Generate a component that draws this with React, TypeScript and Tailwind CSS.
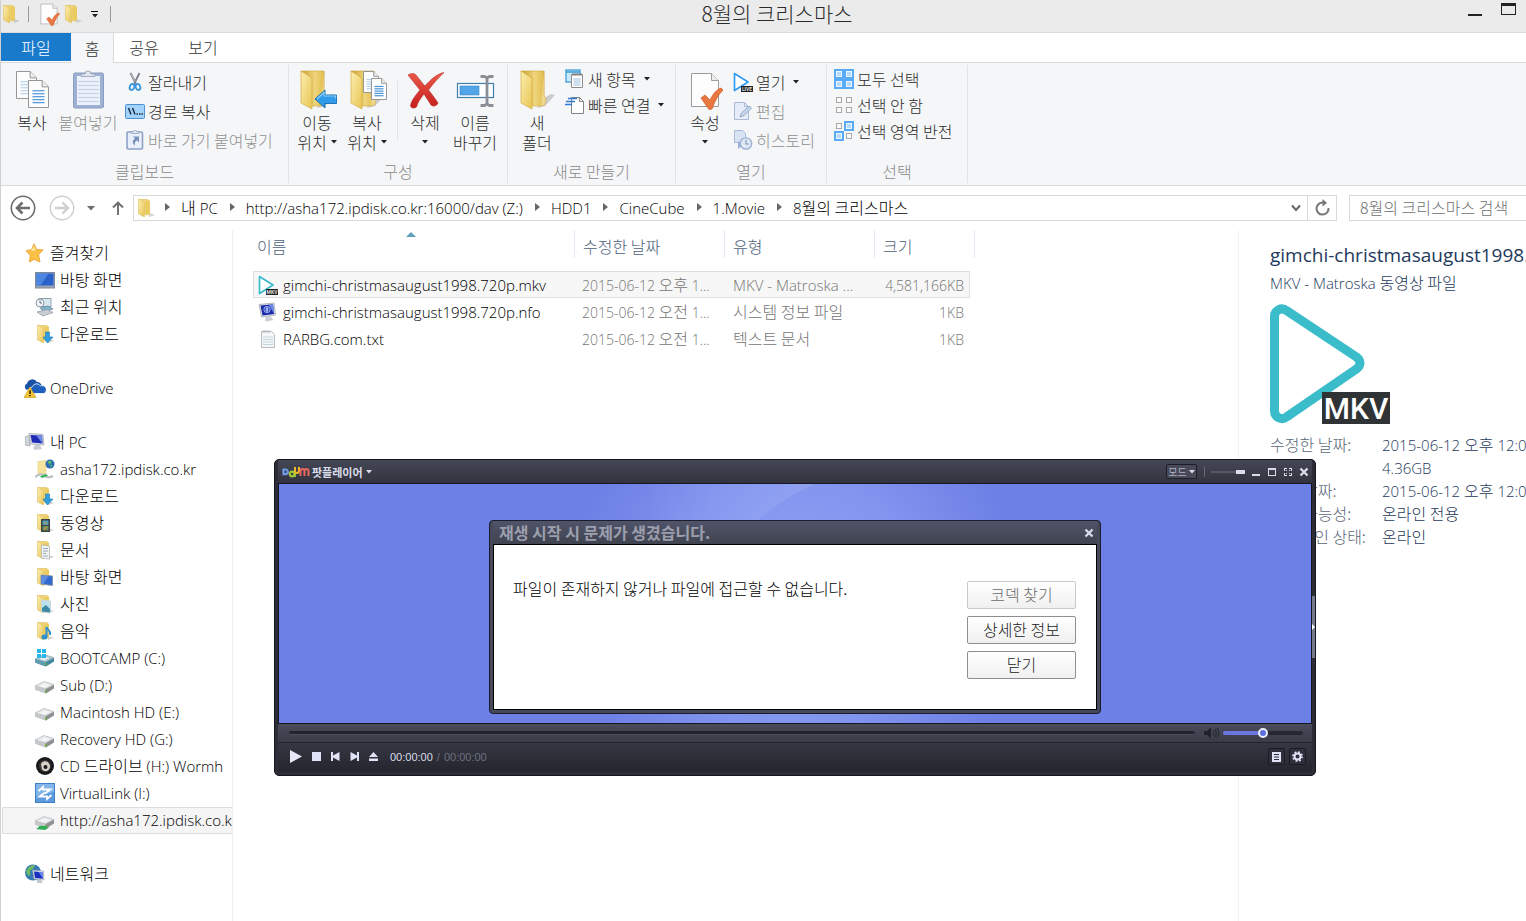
import type { ReactNode } from "react";

/* ---------- text ---------- */

const LATIN = "font-['Open_Sans','Noto_Sans_CJK_KR',sans-serif]";

/** Sets Latin runs in a slightly smaller humanist face beside Hangul. */
function Mix({ text, small = false }: { text: string; small?: boolean }) {
  const parts = text.split(/([\uAC00-\uD7A3]+(?: [\uAC00-\uD7A3]+)*)/);
  return (
    <span className="whitespace-pre">
      {parts.map((p, i) =>
        i % 2 === 1 ? (
          <span key={i}>{p}</span>
        ) : p ? (
          <span key={i} className={`${LATIN} leading-none ${small ? "text-[14px]" : "text-[15px]"}`}>
            {p}
          </span>
        ) : null,
      )}
    </span>
  );
}

/* ---------- icons ---------- */

type Size = { size?: number };

function Folder({ size = 20, children }: Size & { children?: ReactNode }) {
  return (
    <svg width={size} height={size} viewBox="0 0 20 20" className="shrink-0" aria-hidden="true">
      <defs>
        <linearGradient id="fold" x1="0" y1="0" x2="1" y2="1">
          <stop offset="0" stopColor="#fdf0b4" />
          <stop offset="1" stopColor="#e6c353" />
        </linearGradient>
      </defs>
      <path d="M12 15l5 1 2 1-6 2z" fill="#b9b9b9" opacity=".6" />
      <path d="M3 1.500h8.500l1.500 1V15.500H3z" fill="#f0d477" stroke="#d9b74d" strokeWidth=".5" />
      <path d="M9.500 3.500l4.500-1v14l-4.500 1z" fill="#e9cb62" />
      <path d="M2.500 1l6 3.500v14.500l-6-3z" fill="url(#fold)" stroke="#dcbd5c" strokeWidth=".5" />
      {children}
    </svg>
  );
}

function BigFolder({ children }: { children?: ReactNode }) {
  return (
    <svg width="40" height="40" viewBox="0 0 40 40" aria-hidden="true">
      <defs>
        <linearGradient id="bf1" x1="0" y1="0" x2="1" y2="1">
          <stop offset="0" stopColor="#fbeeb0" />
          <stop offset="1" stopColor="#e9c552" />
        </linearGradient>
        <linearGradient id="bf2" x1="0" y1="0" x2="1" y2="0">
          <stop offset="0" stopColor="#c99e2d" />
          <stop offset=".6" stopColor="#efd57c" />
          <stop offset="1" stopColor="#e2bd50" />
        </linearGradient>
      </defs>
      <path d="M24 30l10-6 4 1-10 11-8 2z" fill="#9a9a9a" opacity=".45" />
      <path d="M4 1h23v33l-3 2H12z" fill="url(#bf2)" stroke="#cda43a" strokeWidth=".6" />
      <path d="M27 1v25l2 2-1 7-4 1" fill="#efd88c" stroke="#cda43a" strokeWidth=".5" />
      <path d="M4 1l11 7v31L4 33z" fill="url(#bf1)" stroke="#d4ac44" strokeWidth=".7" />
      {children}
    </svg>
  );
}

function Page({ x, y, w, h, lines = "#4a95d8" }: { x: number; y: number; w: number; h: number; lines?: string }) {
  const rows = [0.38, 0.49, 0.6, 0.71, 0.82];
  return (
    <g>
      <path
        d={`M${x} ${y}h${w * 0.68}l${w * 0.32} ${w * 0.32}v${h - w * 0.32}h${-w}z`}
        fill="#fdfdfd"
        stroke="#969696"
        strokeWidth="1"
      />
      <path d={`M${x + w * 0.68} ${y}v${w * 0.32}h${w * 0.32}`} fill="#eee" stroke="#969696" strokeWidth="1" />
      {rows.map((r) => (
        <path key={r} d={`M${x + w * 0.2} ${y + h * r}h${w * 0.6}`} stroke={lines} strokeWidth="1.200" />
      ))}
    </g>
  );
}

const CopyIcon = () => (
  <svg width="36" height="40" viewBox="0 0 36 40" aria-hidden="true">
    <Page x={2.5} y={1.5} w={20} h={27} lines="#b9d3ea" />
    <Page x={14.5} y={10.5} w={20} h={27} />
  </svg>
);

const PasteIcon = () => (
  <svg width="34" height="40" viewBox="0 0 34 40" aria-hidden="true">
    <path d="M4 3h27a1.500 1.500 0 011.500 1.500V37l-2 1H4a1.500 1.500 0 01-1.500-1.500v-32A1.500 1.500 0 014 3z" fill="#9fb1d3" stroke="#8b9dc0" />
    <path d="M6 6h23v29H6z" fill="#eaf1fb" />
    <path d="M7 11.500h21M7 15.500h21M7 19.500h21M7 23.500h21M7 27.500h21M7 31.500h21" stroke="#c3d0e8" />
    <path d="M10 6.500V4h4a3 3 0 016 0h4v2.500z" fill="#dfe4ee" stroke="#96a3bb" strokeWidth=".9" />
  </svg>
);

const CutIcon = () => (
  <svg width="20" height="20" viewBox="0 0 20 20" aria-hidden="true">
    <path d="M5.500 1l5.500 11M14.500 1L9 12" stroke="#7c858f" strokeWidth="1.900" />
    <path d="M6 1.500l4 8" stroke="#c9ced4" strokeWidth=".7" />
    <ellipse cx="7" cy="15" rx="2.300" ry="3" fill="none" stroke="#3b97dd" strokeWidth="1.900" transform="rotate(20 7 15)" />
    <ellipse cx="13" cy="15" rx="2.300" ry="3" fill="none" stroke="#3b97dd" strokeWidth="1.900" transform="rotate(-20 13 15)" />
  </svg>
);

const PathIcon = () => (
  <svg width="20" height="20" viewBox="0 0 20 20" aria-hidden="true">
    <rect x=".5" y="3.500" width="19" height="14" rx="1" fill="#a3d2fb" stroke="#4d90cf" />
    <path d="M3.500 7l2.500 6.500M7.500 7l2.500 6.500" stroke="#16293c" strokeWidth="1.400" />
    <path d="M11.500 13h1.400M14 13h1.400M16.500 13h1.400" stroke="#16293c" strokeWidth="1.500" />
  </svg>
);

const ShortcutIcon = () => (
  <svg width="20" height="20" viewBox="0 0 20 20" aria-hidden="true">
    <rect x="2" y="2" width="15.500" height="17" rx="1" fill="#e8eefa" stroke="#8da1c9" strokeWidth="1.600" />
    <path d="M6.500 3.500V1.500h2a1.500 1.500 0 013 0h2v2z" fill="#dfe4ee" stroke="#97a5bf" strokeWidth=".8" />
    <path d="M8 6.500h6v6l-2-2c-2 1-2.500 2.500-2 5-3-2-3-5 0-7z" fill="#7a90bd" />
  </svg>
);

const MoveIcon = () => (
  <BigFolder>
    <path d="M18 29l10-9v5h11.500v8.500H28V38z" fill="#2f9bea" stroke="#1769ad" strokeWidth=".9" />
    <path d="M20 29l7-6.500v3.500h11.500v2.500" fill="none" stroke="#8ccdfa" strokeWidth="1.200" />
  </BigFolder>
);

const CopyToIcon = () => (
  <BigFolder>
    <Page x={16.5} y={1.5} w={15} h={21} lines="#b9d3ea" />
    <Page x={24.5} y={8.5} w={15} h={21} />
  </BigFolder>
);

const DeleteIcon = () => (
  <svg width="40" height="40" viewBox="0 0 40 40" aria-hidden="true">
    <defs>
      <linearGradient id="del" x1="0" y1="0" x2="0" y2="1">
        <stop offset="0" stopColor="#ec5a4a" />
        <stop offset="1" stopColor="#c61f1c" />
      </linearGradient>
    </defs>
    <path
      d="M3 5c3-2 6-2 8 0 4 5 6 8 9 11C26 9 32 4 39 2.500 33 8 28 14 23.500 20c4 5 7 9 9.500 13-1 3-5 4-7 2-2-4-5-7-7-11-4 5-6 8-7.500 13-2 1.500-5 1.500-6-1C6 31 10 26 15 20 11 15 7 10 3 5z"
      fill="url(#del)"
      stroke="#b32a22"
      strokeWidth=".6"
    />
  </svg>
);

const RenameIcon = () => (
  <svg width="40" height="40" viewBox="0 0 40 40" aria-hidden="true">
    <rect x="2.500" y="13.500" width="36" height="14" fill="#fff" stroke="#3f7fae" strokeWidth="1.200" />
    <rect x="5" y="16" width="19" height="9" fill="#51a5e8" stroke="#3a83c2" strokeWidth=".6" />
    <path d="M25.500 6.500h4l2.500 1.500 2.500-1.500h4M32 8v27M25.500 35.500h4l2.500-1.500 2.500 1.500h4" fill="none" stroke="#8a8f95" strokeWidth="2.800" />
  </svg>
);

const NewItemIcon = () => (
  <svg width="20" height="20" viewBox="0 0 20 20" aria-hidden="true">
    <rect x="1" y="1" width="14" height="12" fill="#cbe9fb" stroke="#3d9fd6" strokeWidth="1.300" />
    <path d="M1 3h14" stroke="#3d9fd6" strokeWidth="1.600" />
    <path d="M6.500 5.500h11v13h-11z" fill="#fff" stroke="#8c8c8c" />
    <path d="M8 4v3M10 4v3M12 4v3M14 4v3M16 4v3" stroke="#777" strokeWidth=".9" />
    <path d="M8.500 10h7M8.500 12h7M8.500 14h7M8.500 16h7" stroke="#9fbfe0" />
  </svg>
);

const EasyIcon = () => (
  <svg width="20" height="20" viewBox="0 0 20 20" aria-hidden="true">
    <path d="M6.500 2.500h8l4 4v12h-12z" fill="#fff" stroke="#858585" />
    <path d="M14.500 2.500v4h4" fill="none" stroke="#858585" />
    <path d="M3 3.500h9M1 6.500h9M0 9.500h7" stroke="#2f7cd0" strokeWidth="1.500" />
  </svg>
);

const PropsIcon = ({ size = 40 }: Size) => (
  <svg width={size} height={size} viewBox="0 0 40 40" aria-hidden="true">
    <path d="M6.500 3.500h20l7 7v26h-27z" fill="#fdfdfd" stroke="#9b9b9b" />
    <path d="M26.500 3.500v7h7" fill="#eee" stroke="#9b9b9b" />
    <path d="M16 28l4-3 5 5c3-6 6-10 11-12l2 2c-5 5-8 11-11 19l-3 .5z" fill="#e97742" stroke="#cf5a26" strokeWidth=".7" />
  </svg>
);

const PlayFileIcon = ({ color, tag }: { color: string; tag: string }) => (
  <svg width="20" height="20" viewBox="0 0 20 20" aria-hidden="true">
    <path d="M1.500 1.500L15 10 1.500 18.500z" fill="#fff" stroke={color} strokeWidth="1.700" strokeLinejoin="round" />
    <rect x="8" y="14" width="12" height="6" fill="#222" />
    <text x="14" y="19" textAnchor="middle" fontFamily="Roboto" fontSize="5" fontWeight="700" fill="#ddd">
      {tag}
    </text>
  </svg>
);

const EditIcon = () => (
  <svg width="20" height="20" viewBox="0 0 20 20" aria-hidden="true">
    <path d="M1.500 1.500h10l4 4v13h-14z" fill="#e6edf8" stroke="#a9b9d6" />
    <path d="M11.500 1.500v4h4" fill="none" stroke="#a9b9d6" />
    <path d="M7 16l1.500-4L16 5l2.500 2-7.500 7.500z" fill="#c4d3ea" stroke="#8ea3c8" strokeWidth=".9" />
  </svg>
);

const HistoryIcon = () => (
  <svg width="20" height="20" viewBox="0 0 20 20" aria-hidden="true">
    <path d="M1.500.5h8l3 3v9h-11z" fill="#d8e3f3" stroke="#a9bbd9" />
    <path d="M5 11l5 4-5 4z" fill="#9bb2d8" />
    <circle cx="13" cy="13.500" r="5.700" fill="#dfe8f5" stroke="#9db0d2" strokeWidth="1.300" />
    <path d="M13 10v4h3" fill="none" stroke="#8398c0" strokeWidth="1.200" />
  </svg>
);

function SelectIcon({ on }: { on: boolean[] }) {
  const cells = [
    [0, 0],
    [10, 0],
    [0, 10],
    [10, 10],
  ];
  return (
    <svg width="20" height="20" viewBox="0 0 20 20" aria-hidden="true">
      {cells.map(([x, y], i) => (
        <g key={i}>
          {on[i] && <rect x={x} y={y} width="10" height="10" fill="#5aabf5" />}
          <rect
            x={x + 2.5}
            y={y + 2.5}
            width="5"
            height="5"
            fill={on[i] ? "#b5dafb" : "#fafafa"}
            stroke={on[i] ? "#eaf5ff" : "#a8a8a8"}
          />
        </g>
      ))}
    </svg>
  );
}

const Star = () => (
  <svg width="20" height="20" viewBox="0 0 20 20" aria-hidden="true">
    <path d="M9 .8l2.600 5.700 6.600.3-4.600 5 1.400 7.200-5.800-2.600L4.500 19l.7-6.500L1 7.500l5.500-.7z" fill="#fbc147" stroke="#e89d2e" strokeWidth=".8" />
    <path d="M9 3l1.800 4.500L6 8z" fill="#ffe59a" />
  </svg>
);

const Desktop = () => (
  <svg width="20" height="20" viewBox="0 0 20 20" aria-hidden="true">
    <rect x=".5" y="2.500" width="19" height="15.500" fill="#9aa6b5" stroke="#7e8a99" />
    <rect x="1.500" y="3.500" width="17" height="12" fill="#2a62c9" />
    <path d="M1.500 3.500h12l-8 12h-4z" fill="#4d86e2" />
  </svg>
);

const Recent = () => (
  <svg width="20" height="20" viewBox="0 0 20 20" aria-hidden="true">
    <rect x="4" y="1.500" width="12" height="8" fill="#d7e6ef" stroke="#95a5b0" />
    <circle cx="5" cy="6" r="4" fill="#eef4f8" stroke="#8d9ba6" />
    <path d="M5 3.500V6h2" fill="none" stroke="#5d6a75" strokeWidth=".9" />
    <path d="M5 11l8-2 5 3-9 3z" fill="#7eb6cf" stroke="#6a8391" strokeWidth=".7" />
    <path d="M2 15l10-2.500 6 3-10 3.500z" fill="#c7ced4" stroke="#8b959d" strokeWidth=".7" />
  </svg>
);

const Cloud = () => (
  <svg width="22" height="20" viewBox="0 0 22 20" className="shrink-0" aria-hidden="true">
    <path d="M3 12a3.500 3.500 0 010-6.500A5.500 5.500 0 0113 4a5 5 0 015 5H7z" fill="#1a52a8" />
    <path d="M8 15.500a4 4 0 01.5-7 4.500 4.500 0 018-.5 3.800 3.800 0 013.500 7.500z" fill="#1f5fbd" stroke="#fff" strokeWidth=".8" />
    <path d="M6 9l6 10.500H0z" fill="#f5c433" stroke="#c9971b" strokeWidth=".6" />
    <path d="M6 12.500v3.500M6 17v1.300" stroke="#2b2108" strokeWidth="1.500" />
  </svg>
);

const Pc = () => (
  <svg width="20" height="20" viewBox="0 0 20 20" aria-hidden="true">
    <path d="M0 5l5-2v11l-5-1z" fill="#cfd4da" stroke="#8f979f" strokeWidth=".6" />
    <path d="M4 1.500l14 .8.800 10.700L5.500 12z" fill="#dfe3e8" stroke="#98a1ab" strokeWidth=".7" />
    <path d="M5.500 3l11.500.5.500 8L7 10.500z" fill="#1f2bb5" />
    <path d="M11 3.300l6 .2.500 8z" fill="#6f8bea" />
    <path d="M10 13h5l2 4-7 1-2-2z" fill="#c9ced4" />
  </svg>
);

const Nfo = () => (
  <svg width="20" height="20" viewBox="0 0 20 20" aria-hidden="true">
    <path d="M1 2.500L16 1l1.500 12L3.500 15z" fill="#dfe3e8" stroke="#98a1ab" strokeWidth=".7" />
    <path d="M2.500 3.500L15 2.300l1.200 9.700L4.500 13.500z" fill="#1c2aa8" />
    <path d="M11 3l4-.7 1.200 9.700z" fill="#6f8bea" />
    <circle cx="9" cy="7.500" r="3.200" fill="#3f59d0" stroke="#a9bcf5" strokeWidth=".8" />
    <path d="M9 5.500v4" stroke="#e4ebff" strokeWidth="1.300" />
    <path d="M8 15l5-.7 1 2.500 2 1.200-8 1.500-1-1.500z" fill="#c9ced4" />
  </svg>
);

const Globe = ({ x, y, r }: { x: number; y: number; r: number }) => (
  <g>
    <circle cx={x} cy={y} r={r} fill="#2d6db5" />
    <path d={`M${x - r * 0.6} ${y - r * 0.5}q${r * 0.6} ${-r * 0.5} ${r} 0l${-r * 0.5} ${r * 0.7}z`} fill="#62b964" />
    <path d={`M${x} ${y + r * 0.2}h${r * 0.6}l${-r * 0.4} ${r * 0.6}z`} fill="#62b964" />
  </g>
);

const NetFolder = () => (
  <svg width="20" height="20" viewBox="0 0 20 20" aria-hidden="true">
    <path d="M3 2.500l8-1v13H3z" fill="#f6e49e" stroke="#dcc468" strokeWidth=".5" />
    <Globe x={15} y={5} r={4.5} />
    <path d="M0 18c4-3 7-3 9-1.500S15 19 18 17" fill="none" stroke="#b9c0c5" strokeWidth="2.200" />
    <path d="M5 17.500l6-2.500 2 1.500-6 2.500z" fill="#2fb256" />
  </svg>
);

const Drive = ({ windows = false, green = false }: { windows?: boolean; green?: boolean }) => (
  <svg width="20" height="20" viewBox="0 0 20 20" aria-hidden="true">
    <path d="M0 11l9-4.500 10 3v4L11 18.500 0 14.500z" fill={windows ? "#3f86a0" : "#8d9193"} />
    <path d="M0 11l9-4.500 10 3L10.500 14z" fill={windows ? "#a9c7d2" : "#e6e8e9"} stroke="#b2b6b8" strokeWidth=".5" />
    <path d="M4 11l5.500-2.500 5 1.500-5 2.500z" fill="#f8f8f8" opacity=".8" />
    <path d="M0 11l10.500 3v4.500L0 14.500z" fill={windows ? "#5f9db3" : "#c5c9cb"} />
    <path d="M11 15v2.500" stroke="#6ea82e" strokeWidth="1.400" />
    {windows && <path d="M2 1h4v4H2zM7 1h4v4H7zM2 6h4v4H2zM7 6h4v4H7z" fill="#28b5e9" />}
    {green && <path d="M1 19l5-3.500 8 2-4 2.500zM4 16h7v3H4z" fill="#2fae5a" />}
  </svg>
);

const Disc = () => (
  <svg width="20" height="20" viewBox="0 0 20 20" aria-hidden="true">
    <circle cx="10" cy="10" r="9" fill="#17191b" />
    <circle cx="10" cy="10" r="6" fill="#3d3a38" />
    <path d="M6 8a4.500 4.500 0 018-.5 5 5 0 01-1 7 5 5 0 01-6-1z" fill="#d8d2c8" />
    <circle cx="10.500" cy="11" r="2" fill="#1c1c1c" />
  </svg>
);

const VLink = () => (
  <svg width="20" height="20" viewBox="0 0 20 20" aria-hidden="true">
    <rect x=".5" y=".5" width="19" height="19" fill="#5b9ade" stroke="#3f7fc6" />
    <path d="M1 1h18v8L1 13z" fill="#82b6ea" />
    <path d="M3.500 8L8 4v2.500h7.500L10 10.500M16.500 12L12 16v-2.500H4.500L10 9.500" fill="none" stroke="#fff" strokeWidth="1.800" />
  </svg>
);

const NetworkIcon = () => (
  <svg width="20" height="20" viewBox="0 0 20 20" aria-hidden="true">
    <circle cx="8" cy="8.500" r="8" fill="#3579b5" />
    <path d="M1 7c2-4 5-6 9-6-1 3-2 4-4 5s0 3-1 5-3 0-4-4z" fill="#6cbd5d" />
    <path d="M7.500 6l11 1 .5 9L9 15z" fill="#dde2e8" stroke="#8e98a3" strokeWidth=".6" />
    <path d="M9 7.500l8.500.7.500 6.500-8-.8z" fill="#1b2fc0" />
    <path d="M13.500 8l4 .3.500 6.200z" fill="#6c8df0" />
    <path d="M12 16h4l2 3h-6z" fill="#c3c8ce" />
  </svg>
);

const Txt = () => (
  <svg width="20" height="20" viewBox="0 0 20 20" aria-hidden="true">
    <path d="M3.500 2.500h10l3 3v13h-13z" fill="#f4f6f7" stroke="#b6bcc0" />
    <path d="M5 1v3M7 1v3M9 1v3M11 1v3" stroke="#b6bcc0" strokeWidth=".9" />
    <path d="M5 8h10M5 10.500h10M5 13h10M5 15.500h10" stroke="#c3d5e0" strokeWidth="1.200" />
  </svg>
);

const DownFolder = () => (
  <Folder>
    <path d="M10.500 8h4v5H18l-5.500 6L8 13h2.500z" fill="#2f9fe0" stroke="#1d78b8" strokeWidth=".6" />
  </Folder>
);
const VideoFolder = () => (
  <Folder>
    <path d="M6 6h9v13H6z" fill="#3b4145" />
    <path d="M7.500 7.500h6v4.500h-6z" fill="#4aa2b8" />
    <path d="M7.500 13h6v4.500h-6z" fill="#6d8f5a" />
    <path d="M9 9l3 2M9 16l3-2" stroke="#c98a52" strokeWidth="1.200" />
  </Folder>
);
const DocFolder = () => (
  <Folder>
    <path d="M6.500 5l8 1v13l-8-1z" fill="#f1f3f5" stroke="#a7adb3" strokeWidth=".7" />
    <path d="M8 8.500h5M8 11h5M8 13.500h3M8 16h5" stroke="#9aa8b8" />
  </Folder>
);
const DeskFolder = () => (
  <Folder>
    <path d="M6 8l11.500 1v9.500L6 17z" fill="#3069cf" stroke="#8795a6" strokeWidth=".9" />
    <path d="M6.500 8.500l7 .5-5 8-2-.3z" fill="#5c8de2" />
  </Folder>
);
const PicFolder = () => (
  <Folder>
    <path d="M6.500 6l9 1v12l-9-1z" fill="#b9e0ee" stroke="#cdd6da" strokeWidth=".9" />
    <path d="M7 14l4-3 4 4v3.500l-8-1z" fill="#3e8aa3" />
  </Folder>
);
const MusicFolder = () => (
  <Folder>
    <path d="M11.500 6v9.500" stroke="#2c92cf" strokeWidth="2" />
    <path d="M11.500 6c1 3 5 4 3.500 8" fill="none" stroke="#2c92cf" strokeWidth="1.800" />
    <ellipse cx="9.500" cy="16" rx="3" ry="2.500" fill="#2c92cf" />
  </Folder>
);

const Caret = ({ className = "text-[#222]" }: { className?: string }) => (
  <svg width="6" height="4" viewBox="0 0 6 4" className={`shrink-0 ${className}`} aria-hidden="true">
    <path d="M0 0h6L3 3.500z" fill="currentColor" />
  </svg>
);

/* ---------- ribbon ---------- */

function Group({ label, className = "", children }: { label: string; className?: string; children: ReactNode }) {
  return (
    <section className={`flex h-[118px] shrink-0 flex-col border-r border-[#e2e3e4] pb-[2px] ${className}`} aria-label={label}>
      <div className="flex flex-1 items-start">{children}</div>
      <div className="h-5 text-center leading-5 text-[#8a8a8a]">{label}</div>
    </section>
  );
}

function Big({
  icon,
  lines,
  width = "w-[50px]",
  disabled,
  caret,
}: {
  icon: ReactNode;
  lines: string[];
  width?: string;
  disabled?: boolean;
  caret?: boolean;
}) {
  return (
    <button
      type="button"
      disabled={disabled}
      className={`flex shrink-0 flex-col items-center pt-1 leading-5 whitespace-nowrap ${width} ${disabled ? "text-[#8f8f8f]" : "text-[#2b2b2b]"}`}
    >
      <span className="flex h-[42px] items-center">{icon}</span>
      <span className="mt-px">{lines[0]}</span>
      <span className="flex h-5 items-center gap-1">
        {lines[1]}
        {caret && <Caret />}
      </span>
    </button>
  );
}

function Small({
  icon,
  label,
  caret,
  disabled,
  tall,
}: {
  icon: ReactNode;
  label: string;
  caret?: boolean;
  disabled?: boolean;
  tall?: boolean;
}) {
  return (
    <button
      type="button"
      disabled={disabled}
      className={`flex items-center whitespace-nowrap ${tall ? "h-[29px]" : "h-[26px]"} ${disabled ? "text-[#8f8f8f]" : "text-[#2b2b2b]"}`}
    >
      {icon}
      <span className="ml-[3px]">{label}</span>
      {caret && <Caret className="ml-2 text-[#222]" />}
    </button>
  );
}

function Ribbon() {
  return (
    <div className="flex h-[123px] items-start overflow-hidden border-b border-[#dadbdc] bg-[#f5f6f7] pt-[2px]">
      <Group label="클립보드" className="w-[288px]">
        <Big icon={<CopyIcon />} lines={["복사"]} width="ml-2 w-[46px]" />
        <Big icon={<PasteIcon />} lines={["붙여넣기"]} width="ml-[3px] w-[60px]" disabled />
        <div className="ml-[7px] flex flex-col pt-[2px]">
          <Small tall icon={<CutIcon />} label="잘라내기" />
          <Small tall icon={<PathIcon />} label="경로 복사" />
          <Small tall icon={<ShortcutIcon />} label="바로 가기 붙여넣기" disabled />
        </div>
      </Group>
      <Group label="구성" className="w-[219px]">
        <Big icon={<MoveIcon />} lines={["이동", "위치"]} caret width="ml-[3px] w-[50px]" />
        <Big icon={<CopyToIcon />} lines={["복사", "위치"]} caret />
        <div className="mt-4 mr-[2px] ml-[5px] h-[60px] w-px bg-[#e2e3e4]" />
        <Big icon={<DeleteIcon />} lines={["삭제"]} caret />
        <Big icon={<RenameIcon />} lines={["이름", "바꾸기"]} />
      </Group>
      <Group label="새로 만들기" className="w-[168px]">
        <Big icon={<BigFolder />} lines={["새", "폴더"]} width="ml-1 w-[50px]" />
        <div className="ml-[3px] flex flex-col pt-px">
          <Small icon={<NewItemIcon />} label="새 항목" caret />
          <Small icon={<EasyIcon />} label="빠른 연결" caret />
        </div>
      </Group>
      <Group label="열기" className="w-[151px]">
        <Big icon={<PropsIcon />} lines={["속성"]} caret width="ml-1 w-[50px]" />
        <div className="ml-[3px] flex flex-col pt-[2px]">
          <Small tall icon={<PlayFileIcon color="#339bf0" tag="LIVE" />} label="열기" caret />
          <Small tall icon={<EditIcon />} label="편집" disabled />
          <Small tall icon={<HistoryIcon />} label="히스토리" disabled />
        </div>
      </Group>
      <Group label="선택" className="w-[141px]">
        <div className="ml-[7px] flex flex-col pt-px">
          <Small icon={<SelectIcon on={[true, true, true, true]} />} label="모두 선택" />
          <Small icon={<SelectIcon on={[false, false, false, false]} />} label="선택 안 함" />
          <Small icon={<SelectIcon on={[false, true, true, false]} />} label="선택 영역 반전" />
        </div>
      </Group>
    </div>
  );
}

/* ---------- title and tabs ---------- */

function TitleBar() {
  return (
    <header className="flex h-8 items-start justify-between bg-[#ebebeb]">
      <div className="flex h-7 flex-1 items-center">
        <Folder />
        <span className="mr-2 ml-[7px] h-4 w-px bg-[#9a9a9a]" />
        <button type="button" aria-label="속성">
          <PropsIcon size={24} />
        </button>
        <button type="button" aria-label="새 폴더" className="ml-[2px]">
          <Folder />
        </button>
        <button type="button" aria-label="빠른 실행 도구 모음 사용자 지정" className="ml-2 flex flex-col items-center gap-[2px]">
          <span className="h-px w-[7px] bg-black" />
          <Caret />
        </button>
        <span className="ml-3 h-4 w-px bg-[#9a9a9a]" />
      </div>
      <h1 className="ml-[37px] text-[21px] leading-[26px] font-light text-[#2b2b2b]">8월의 크리스마스</h1>
      <div className="flex flex-1 justify-end gap-[19px] pr-[10px]">
        <button type="button" aria-label="최소화" className="flex h-4 w-[14px] items-end">
          <span className="h-[2px] w-full bg-[#222]" />
        </button>
        <button type="button" aria-label="최대화" className="mt-[3px] h-3 w-[15px] border border-t-[3px] border-[#222]" />
      </div>
    </header>
  );
}

function Tabs() {
  return (
    <nav className="flex h-[31px] border-y border-[#dadbdc] bg-white leading-[29px] text-[#333]">
      <button type="button" className="h-[28px] w-[70px] bg-[#1979ca] leading-7 text-white">
        파일
      </button>
      <button type="button" className="h-[30px] w-[43px] border-r border-[#dadbdc] bg-[#f5f6f7]">
        홈
      </button>
      <button type="button" className="ml-[2px] w-[56px]">
        공유
      </button>
      <button type="button" className="ml-[3px] w-[56px]">
        보기
      </button>
    </nav>
  );
}

/* ---------- address bar ---------- */

const crumbs = ["내 PC", "http://asha172.ipdisk.co.kr:16000/dav (Z:)", "HDD1", "CineCube", "1.Movie", "8월의 크리스마스"];

function Address() {
  return (
    <div className="flex h-11 items-center">
      <button type="button" aria-label="뒤로" className="ml-[9px]">
        <svg width="26" height="26" viewBox="0 0 26 26">
          <circle cx="13" cy="13" r="11.700" fill="none" stroke="#6d6d6d" strokeWidth="1.600" />
          <path d="M20 13H8M12.500 7.500L7 13l5.500 5.500" fill="none" stroke="#6d6d6d" strokeWidth="2.600" />
        </svg>
      </button>
      <button type="button" aria-label="앞으로" className="ml-[13px]">
        <svg width="26" height="26" viewBox="0 0 26 26">
          <circle cx="13" cy="13" r="11.700" fill="none" stroke="#cfcfcf" strokeWidth="1.400" />
          <path d="M6 13h12M13.500 7.500L19 13l-5.500 5.500" fill="none" stroke="#cfcfcf" strokeWidth="2.400" />
        </svg>
      </button>
      <button type="button" aria-label="최근 위치" className="ml-3 flex w-2 justify-center">
        <svg width="8" height="5" viewBox="0 0 8 5" aria-hidden="true">
          <path d="M0 0h8L4 4.500z" fill="#6d6d6d" />
        </svg>
      </button>
      <button type="button" aria-label="위로" className="mr-2 ml-4">
        <svg width="14" height="16" viewBox="0 0 14 16">
          <path d="M7 15V2.500M2 7.500l5-5 5 5" fill="none" stroke="#6d6d6d" strokeWidth="1.900" />
        </svg>
      </button>
      <div className="flex h-[26px] min-w-0 flex-1 items-center border border-[#d9d9d9] pl-[2px]">
        <Folder />
        {crumbs.map((c, i) => (
          <span key={c} className="flex shrink-0 items-center pb-[2px]">
            <svg width="6" height="8" viewBox="0 0 6 8" className={i === 0 ? "mr-[10px] ml-[9px]" : "mr-[10px] ml-3"} aria-hidden="true">
              <path d="M0 0v8l5-4z" fill="#666" />
            </svg>
            <a href="#" className="leading-[22px]">
              <Mix text={c} />
            </a>
          </span>
        ))}
        <button type="button" aria-label="이전 위치" className="ml-auto flex h-full w-[23px] items-center justify-center border-r border-[#d9d9d9]">
          <svg width="10" height="8" viewBox="0 0 10 8">
            <path d="M1 1.500l4 4.500 4-4.500" fill="none" stroke="#666" strokeWidth="2" />
          </svg>
        </button>
        <button type="button" aria-label="새로 고침" className="flex h-full w-7 items-center justify-center">
          <svg width="17" height="18" viewBox="0 0 17 18">
            <path d="M9.500 3.700A6 6 0 1014.500 9" fill="none" stroke="#777" strokeWidth="2" />
            <path d="M8.500 0v7.500L13 4z" fill="#777" />
          </svg>
        </button>
      </div>
      <input
        type="text"
        aria-label="검색"
        placeholder="8월의 크리스마스 검색"
        className="ml-3 h-[26px] w-[177px] shrink-0 border border-r-0 border-[#d9d9d9] pb-[2px] pl-[10px] text-[#666] outline-none placeholder:text-[#707070]"
      />
    </div>
  );
}

/* ---------- navigation pane ---------- */

type Nav = { icon: ReactNode; text: string; root?: boolean; selected?: boolean; gap?: boolean };

const nav: Nav[] = [
  { icon: <Star />, text: "즐겨찾기", root: true },
  { icon: <Desktop />, text: "바탕 화면" },
  { icon: <Recent />, text: "최근 위치" },
  { icon: <DownFolder />, text: "다운로드" },
  { icon: <Cloud />, text: "OneDrive", root: true, gap: true },
  { icon: <Pc />, text: "내 PC", root: true, gap: true },
  { icon: <NetFolder />, text: "asha172.ipdisk.co.kr" },
  { icon: <DownFolder />, text: "다운로드" },
  { icon: <VideoFolder />, text: "동영상" },
  { icon: <DocFolder />, text: "문서" },
  { icon: <DeskFolder />, text: "바탕 화면" },
  { icon: <PicFolder />, text: "사진" },
  { icon: <MusicFolder />, text: "음악" },
  { icon: <Drive windows />, text: "BOOTCAMP (C:)" },
  { icon: <Drive />, text: "Sub (D:)" },
  { icon: <Drive />, text: "Macintosh HD (E:)" },
  { icon: <Drive />, text: "Recovery HD (G:)" },
  { icon: <Disc />, text: "CD 드라이브 (H:) Wormh" },
  { icon: <VLink />, text: "VirtualLink (I:)" },
  { icon: <Drive green />, text: "http://asha172.ipdisk.co.k", selected: true },
  { icon: <NetworkIcon />, text: "네트워크", root: true, gap: true },
];

function Sidebar() {
  return (
    <aside className="w-[232px] shrink-0 overflow-hidden border-r border-[#f0f0f0] pt-[10px]">
      <ul className="overflow-hidden">
        {nav.map((n, i) => (
          <li key={i} className={n.gap ? "mt-[27px]" : ""}>
            <a
              href="#"
              className={`ml-px flex h-[27px] items-center gap-[5px] overflow-hidden border border-r-0 pb-[2px] leading-[23px] ${n.root ? "pl-[22px]" : "pl-8"} ${n.selected ? "border-[#dedede] bg-[#f5f5f5]" : "border-transparent"}`}
            >
              <span className="flex w-5 shrink-0 justify-center">{n.icon}</span>
              <Mix text={n.text} />
            </a>
          </li>
        ))}
      </ul>
    </aside>
  );
}

/* ---------- file list ---------- */

const files = [
  { icon: <PlayFileIcon color="#37bccb" tag="MKV" />, name: "gimchi-christmasaugust1998.720p.mkv", date: "2015-06-12 오후 1...", type: "MKV - Matroska ...", size: "4,581,166KB", selected: true },
  { icon: <Nfo />, name: "gimchi-christmasaugust1998.720p.nfo", date: "2015-06-12 오전 1...", type: "시스템 정보 파일", size: "1KB" },
  { icon: <Txt />, name: "RARBG.com.txt", date: "2015-06-12 오전 1...", type: "텍스트 문서", size: "1KB" },
];

function HeadCell({ label, first }: { label: string; first?: boolean }) {
  return (
    <th scope="col" className="relative h-[41px] p-0 text-left align-top font-light">
      <div className={`flex h-8 items-center justify-between text-[#4c607a] ${first ? "pl-1" : "pl-2"}`}>
        {label}
        <span className="h-7 w-px self-start bg-[#e3eaf3]" />
      </div>
      {first && (
        <svg width="10" height="5" viewBox="0 0 10 5" className="absolute top-[2px] left-[153px]" aria-hidden="true">
          <path d="M5 0l5 5H0z" fill="#5f9fb8" />
        </svg>
      )}
    </th>
  );
}

function FileList() {
  return (
    <main className="min-w-0 flex-1 pl-5">
      <table className="w-[722px] table-fixed border-separate border-spacing-0">
        <colgroup>
          <col className="w-[322px]" />
          <col className="w-[150px]" />
          <col className="w-[150px]" />
          <col className="w-[95px]" />
          <col className="w-[5px]" />
        </colgroup>
        <thead>
          <tr>
            <HeadCell label="이름" first />
            <HeadCell label="수정한 날짜" />
            <HeadCell label="유형" />
            <th scope="col" className="p-0 text-left align-top font-light">
              <div className="flex h-8 items-center pl-2 text-[#4c607a]">크기</div>
            </th>
            <td className="p-0 align-top">
              <div className="ml-auto h-7 w-px bg-[#e3eaf3]" />
            </td>
          </tr>
        </thead>
        <tbody className="text-[#757575]">
          {files.map((f) => {
            const edge = f.selected ? "border-[#dedede] bg-[#f7f7f7]" : "border-transparent";
            return (
              <tr key={f.name} className="h-[27px] leading-[23px]">
                <td className={`border-y border-l p-0 ${edge}`}>
                  <div className="flex items-center gap-[5px] pl-1 text-black">
                    {f.icon}
                    <Mix text={f.name} />
                  </div>
                </td>
                <td className={`overflow-hidden border-y p-0 pl-[7px] ${edge}`}>
                  <Mix text={f.date} small />
                </td>
                <td className={`overflow-hidden border-y p-0 pl-2 ${edge}`}>
                  <Mix text={f.type} />
                </td>
                <td className={`border-y border-r p-0 pr-[5px] text-right ${edge}`}>
                  <Mix text={f.size} small />
                </td>
              </tr>
            );
          })}
        </tbody>
      </table>
    </main>
  );
}

/* ---------- details pane ---------- */

const meta = [
  ["수정한 날짜:", "2015-06-12 오후 12:07"],
  ["크기:", "4.36GB"],
  ["만든 날짜:", "2015-06-12 오후 12:07"],
  ["사용 가능성:", "온라인 전용"],
  ["오프라인 상태:", "온라인"],
];

function Details() {
  return (
    <aside className="w-[288px] shrink-0 overflow-hidden border-l border-[#f3f3f3] pt-[11px] pl-[31px] text-[#1e395b]">
      <h2 className={`text-[19px] leading-7 font-normal whitespace-nowrap ${LATIN}`}>gimchi-christmasaugust1998.720p.mkv</h2>
      <p className="leading-[26px]">
        <Mix text="MKV - Matroska 동영상 파일" />
      </p>
      <svg width="120" height="122" viewBox="0 0 120 122" className="mt-2" role="img" aria-label="MKV">
        <path d="M4.500 13.500a7.500 7.500 0 0112-6l70 46.500q7 6 0 12L16.500 114a7.500 7.500 0 01-12-6z" fill="none" stroke="#3bbccb" strokeWidth="9" />
        <rect x="52" y="89" width="68" height="32" fill="#2f3336" />
        <text x="86" y="116" textAnchor="middle" fontFamily="Roboto" fontSize="30" fontWeight="500" fill="#fff">
          MKV
        </text>
      </svg>
      <dl className="mt-2 grid grid-cols-[112px_200px] leading-[23px]">
        {meta.map(([k, v]) => (
          <div key={k} className="contents">
            <dt className="text-[#5a6779]">{k}</dt>
            <dd className="whitespace-nowrap">
              <Mix text={v} />
            </dd>
          </div>
        ))}
      </dl>
    </aside>
  );
}

/* ---------- player ---------- */

const CloseX = () => (
  <svg width="10" height="10" viewBox="0 0 10 10" aria-hidden="true">
    <path d="M1.500 1.500l7 7M8.500 1.500l-7 7" stroke="#d9dcea" strokeWidth="2.300" />
  </svg>
);

const DaumLogo = () => (
  <svg width="28" height="14" viewBox="0 0 28 14" role="img" aria-label="Daum">
    <path d="M1.500 4.500h2a2.300 2.300 0 010 4.600h-2z" fill="none" stroke="#6f9be8" strokeWidth="2.200" />
    <circle cx="10" cy="9" r="2.300" fill="none" stroke="#9fc63b" strokeWidth="2.200" />
    <path d="M13 3v9" stroke="#9fc63b" strokeWidth="2" />
    <path d="M13 2v4a2 2 0 004 0V2" fill="none" stroke="#f0b62c" strokeWidth="2" />
    <path d="M18.500 11V6a1.900 1.900 0 014 0v5M22.500 11V6a1.900 1.900 0 014 0v5" fill="none" stroke="#e8665c" strokeWidth="2" />
  </svg>
);

const actions = [
  { label: "코덱 찾기", disabled: true },
  { label: "상세한 정보", disabled: false },
  { label: "닫기", disabled: false },
];

function ErrorDialog() {
  return (
    <div
      role="dialog"
      aria-labelledby="err-title"
      className="absolute top-9 left-[210px] flex h-[194px] w-[612px] flex-col rounded border border-[#1a1b2b] bg-[#45495a] px-[3px] pb-[3px]"
    >
      <div className="flex h-[23px] items-center justify-between bg-linear-to-b from-[#50546a] to-[#40434f] pr-[3px] pl-[6px]">
        <h3 id="err-title" className="leading-[23px] font-bold text-[#9c9fae]">
          재생 시작 시 문제가 생겼습니다.
        </h3>
        <button type="button" aria-label="닫기">
          <CloseX />
        </button>
      </div>
      <div className="flex flex-1 justify-between border border-black bg-white pt-8 pr-5 pl-[19px]">
        <p className="leading-[22px]">파일이 존재하지 않거나 파일에 접근할 수 없습니다.</p>
        <div className="flex flex-col gap-[7px] pt-1">
          {actions.map((a) => (
            <button
              key={a.label}
              type="button"
              disabled={a.disabled}
              className={`h-7 w-[109px] rounded-[2px] border bg-linear-to-b from-white to-[#f0f0f0] pb-[2px] leading-6 ${a.disabled ? "border-[#c9c9c9] text-[#6b6b6b]" : "border-[#8f8f8f] text-[#222]"}`}
            >
              {a.label}
            </button>
          ))}
        </div>
      </div>
    </div>
  );
}

function Player() {
  return (
    <section
      aria-label="팟플레이어"
      className="absolute top-[459px] left-[273px] flex h-[317px] w-[1042px] flex-col rounded-[5px] border border-[#15161f] bg-[#2c2d36] px-[3px] pb-[3px]"
    >
      <div className="flex h-[23px] items-center bg-linear-to-b from-[#454756] to-[#32333e] pl-1">
        <DaumLogo />
        <button type="button" className="ml-[2px] flex items-center gap-[3px] text-[11px] leading-5 font-bold text-[#d9dcea]">
          팟플레이어
          <Caret className="text-[#d9dcea]" />
        </button>
        <div className="ml-auto flex items-center pr-[3px] text-[#d9dcea]">
          <button type="button" className="flex h-[15px] w-[31px] items-center justify-center gap-[2px] rounded-[2px] border border-[#1c1d26] bg-[#484a5a] text-[10px] leading-3">
            모드
            <Caret className="text-[#d9dcea]" />
          </button>
          <span className="mr-[6px] ml-[7px] h-[10px] w-px bg-[#666979]" />
          <svg width="34" height="10" viewBox="0 0 34 10" aria-hidden="true">
            <path d="M0 5h25" stroke="#6f7283" />
            <path d="M25 3h9v4h-9z" fill="#d9dcea" />
          </svg>
          <button type="button" aria-label="최소화" className="ml-[7px] flex h-2 w-2 items-end">
            <span className="h-[2px] w-2 bg-[#d9dcea]" />
          </button>
          <button type="button" aria-label="최대화" className="ml-2 h-2 w-2 border border-t-2 border-[#d9dcea]" />
          <button type="button" aria-label="전체 화면" className="ml-2">
            <svg width="8" height="8" viewBox="0 0 8 8">
              <path d="M3 .5H.5V3M5 .5h2.500V3M3 7.500H.5V5M5 7.500h2.500V5" fill="none" stroke="#d9dcea" strokeWidth="1.200" />
              <path d="M2 2h1v1H2zM5 2h1v1H5zM2 5h1v1H2zM5 5h1v1H5z" fill="#d9dcea" />
            </svg>
          </button>
          <button type="button" aria-label="플레이어 닫기" className="ml-[7px]">
            <CloseX />
          </button>
        </div>
      </div>
      <div className="relative flex-1 border border-[#15161f] bg-[#6d80e5] bg-[radial-gradient(circle_225px_at_50%_50%,#93a6f7_0%,#8295ef_55%,#6d80e5_100%)]">
        <svg width="240" height="37" viewBox="0 0 240 37" className="absolute top-0 left-[296px]" aria-hidden="true">
          <defs>
            <linearGradient id="sheen" x1="0" y1="0" x2="1" y2="0">
              <stop offset=".3" stopColor="#fff" stopOpacity="0" />
              <stop offset="1" stopColor="#fff" stopOpacity=".1" />
            </linearGradient>
          </defs>
          <path d="M0 0h240Q208 14 182 37H0z" fill="url(#sheen)" />
        </svg>
        <ErrorDialog />
      </div>
      <div className="flex h-[18px] items-center bg-linear-to-b from-[#4a4c5b] to-[#3a3b47] pr-[9px] pl-[11px]">
        <input
          type="range"
          aria-label="재생 위치"
          defaultValue={0}
          className="h-1 min-w-0 flex-1 appearance-none rounded-full border-b border-[#4c4e5c] bg-[#22232c] [&::-webkit-slider-thumb]:size-0 [&::-webkit-slider-thumb]:appearance-none"
        />
        <svg width="16" height="12" viewBox="0 0 16 12" className="mr-[3px] ml-[9px]" aria-hidden="true">
          <path d="M0 4h3l4-3.500v11L3 8H0z" fill="#20212a" />
          <path d="M9 3.500q1.500 2.500 0 5M11 2q2.500 4 0 8M13 1q3.500 5 0 10" fill="none" stroke="#272833" strokeWidth="1.100" />
        </svg>
        <input
          type="range"
          aria-label="음량"
          defaultValue={50}
          className="h-1 w-20 appearance-none rounded-full bg-linear-to-r from-[#6b76e0] from-50% to-[#262730] to-50% [&::-webkit-slider-thumb]:size-[10px] [&::-webkit-slider-thumb]:appearance-none [&::-webkit-slider-thumb]:rounded-full [&::-webkit-slider-thumb]:border-2 [&::-webkit-slider-thumb]:border-solid [&::-webkit-slider-thumb]:border-[#eceefc] [&::-webkit-slider-thumb]:bg-[#5e6de0]"
        />
      </div>
      <div className="flex h-[30px] items-center border-t border-[#22232c] bg-linear-to-b from-[#363742] to-[#24252d] pr-[6px] pb-[2px] pl-3">
        <div className="flex items-center">
          <button type="button" aria-label="재생">
            <svg width="12" height="13" viewBox="0 0 12 13">
              <path d="M0 0l12 6.500L0 13z" fill="#e6e8f8" />
            </svg>
          </button>
          <button type="button" aria-label="정지" className="ml-[10px] h-[9px] w-[9px] bg-[#e0e3f8]" />
          <button type="button" aria-label="이전" className="ml-[10px]">
            <svg width="9" height="9" viewBox="0 0 9 9">
              <path d="M0 0h2v3.500L8.500 0v9L2 5.500V9H0z" fill="#e0e3f8" />
            </svg>
          </button>
          <button type="button" aria-label="다음" className="ml-[10px]">
            <svg width="9" height="9" viewBox="0 0 9 9">
              <path d="M9 0H7v3.500L.5 0v9L7 5.500V9h2z" fill="#e0e3f8" />
            </svg>
          </button>
          <button type="button" aria-label="열기" className="ml-[10px]">
            <svg width="9" height="9" viewBox="0 0 9 9">
              <path d="M4.500 0L9 5H0zM0 6.500h9V9H0z" fill="#e0e3f8" />
            </svg>
          </button>
        </div>
        <div className="ml-3 flex gap-1 font-['Liberation_Sans',sans-serif] text-[11px] leading-4 text-[#6d7080]">
          <span className="text-[#d9dcea]">00:00:00</span>
          <span>/</span>
          <span>00:00:00</span>
        </div>
        <div className="ml-auto flex gap-1">
          <button type="button" aria-label="재생 목록" className="flex h-[17px] w-[17px] items-center justify-center rounded-[2px] border border-[#1a1b22] bg-[#2f303b]">
            <svg width="9" height="10" viewBox="0 0 9 10">
              <path d="M0 0h9v10H0z" fill="#e0e3f8" />
              <path d="M2 2.500h5M2 5h5M2 7.500h5" stroke="#2a2b34" />
            </svg>
          </button>
          <button type="button" aria-label="설정" className="flex h-[17px] w-[17px] items-center justify-center rounded-[2px] border border-[#1a1b22] bg-[#2f303b]">
            <svg width="11" height="11" viewBox="0 0 11 11">
              <circle cx="5.500" cy="5.500" r="3" fill="none" stroke="#e0e3f8" strokeWidth="2" />
              <circle cx="5.500" cy="5.500" r="4.500" fill="none" stroke="#e0e3f8" strokeWidth="1.800" strokeDasharray="1.770 1.770" />
            </svg>
          </button>
        </div>
      </div>
      <span className="absolute top-[136px] right-0 flex h-[62px] w-[3px] items-center bg-[#777a8c]">
        <svg width="3" height="6" viewBox="0 0 3 6" aria-hidden="true">
          <path d="M0 0l3 3-3 3z" fill="#fff" />
        </svg>
      </span>
    </section>
  );
}

export default function App() {
  return (
    <div className="relative flex min-h-screen flex-col overflow-hidden border-l border-[#d0d0d0] bg-white font-['Noto_Sans_CJK_KR',sans-serif] text-[16px] font-light text-black">
      <TitleBar />
      <Tabs />
      <Ribbon />
      <Address />
      <div className="flex flex-1">
        <Sidebar />
        <FileList />
        <Details />
      </div>
      <Player />
    </div>
  );
}
